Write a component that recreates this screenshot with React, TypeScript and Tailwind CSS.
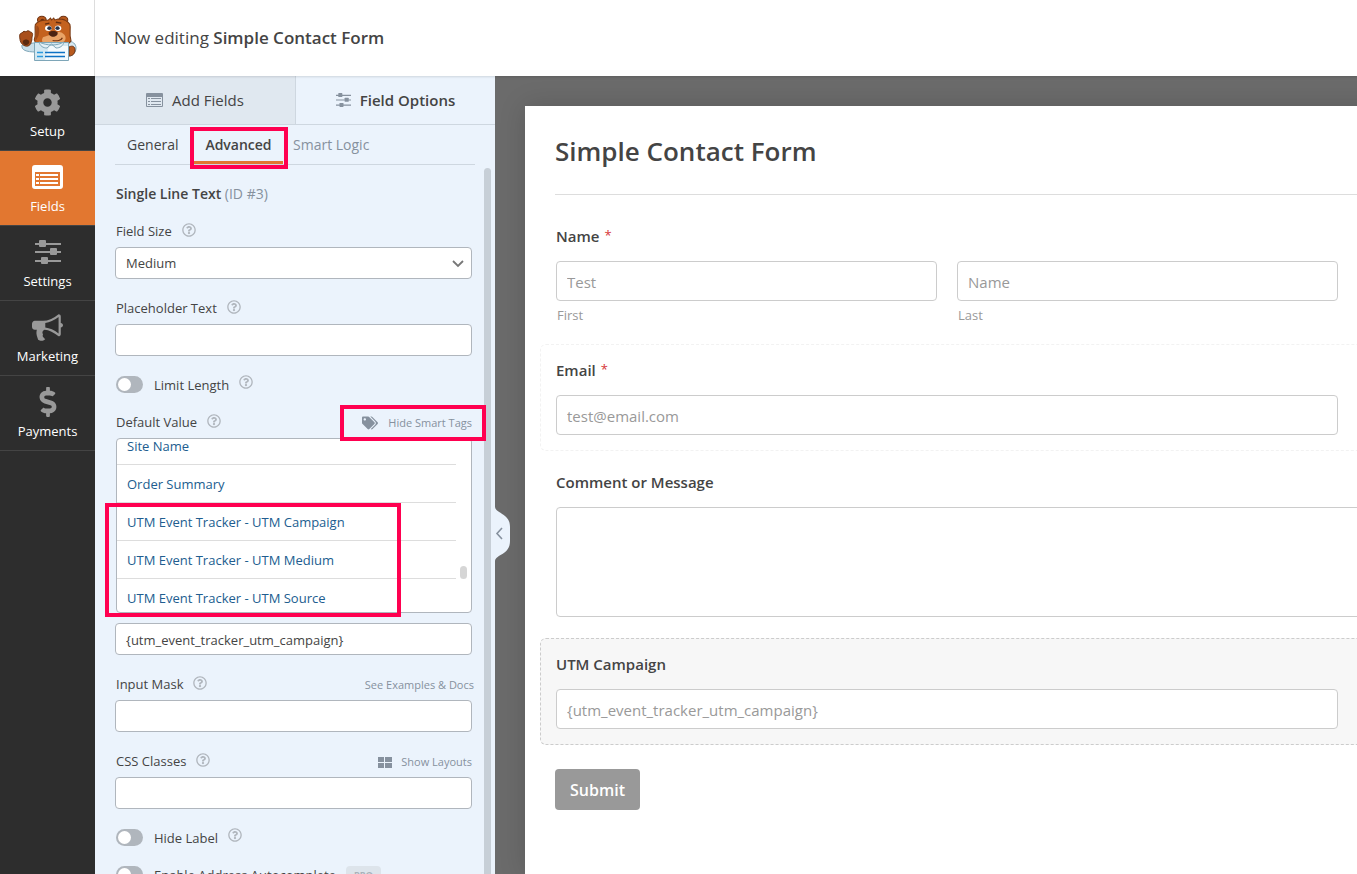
import type { ReactNode } from 'react';
import { FaCog, FaDollarSign, FaRegQuestionCircle, FaTags } from 'react-icons/fa';

function BearLogo() {
  return (
    <svg viewBox="0 0 62 50" className="h-[50px] w-[62px]" role="img" aria-label="Form builder mascot">
      <path d="M6 32c-1 5 4 7 14 7l3-8c-5-2-7-1-11 1z" fill="#c9dfea" stroke="#7ea6b8" strokeWidth="1" />
      <path d="M51 28c6 0 9 3 9 7s-3 8-7 8z" fill="#d8e8f0" stroke="#7ea6b8" strokeWidth="1" />
      <path d="M53 34c4-2 6 0 6 3s-2 6-6 6z" fill="#b85a1e" stroke="#6e3312" strokeWidth="1" />
      <path d="M4 26c-1-4 0-6 2-6 1-2 3-2 4-1 1-2 4-1 4 0 3 0 3 3 2 5 0 4-1 8-4 9-4 1-8-3-8-7z" fill="#a94f1b" stroke="#6e3312" strokeWidth="1" />
      <path d="M7 28c1-2 5-2 6 0s-1 4-3 4-4-2-3-4z" fill="#5b2a10" />
      <g transform="translate(1 1.500) scale(1.080 .91)">
        <circle cx="23" cy="6" r="4" fill="#b85a1e" stroke="#6e3312" />
        <circle cx="43" cy="6" r="4" fill="#b85a1e" stroke="#6e3312" />
        <circle cx="23.500" cy="6.500" r="1.800" fill="#6b3010" />
        <circle cx="42.500" cy="6.500" r="1.800" fill="#6b3010" />
        <path d="M17 11c2-4 8-5 12-5l2-2 1 2 2-2 1 2 3-1c5 0 9 2 11 6 1 5-1 10 1 18-2 5-8 6-17 6s-16-2-17-7c2-7 0-12 1-17z" fill="#c4621f" stroke="#793a14" strokeWidth="1" />
        <path d="M18 12c3 1 3 6 2 11l-3 7c0-6 1-12 1-18z" fill="#9f4a18" />
        <path d="M24 25c-3 6 2 8 8 8s13-2 13-7c0-4-3-6-6-7z" fill="#e9a468" />
        <ellipse cx="29" cy="15" rx="3" ry="3" fill="#fff" />
        <ellipse cx="38" cy="15" rx="3" ry="3" fill="#fff" />
        <circle cx="30" cy="15" r="2" fill="#28344a" />
        <circle cx="37.500" cy="15" r="2" fill="#28344a" />
        <path d="M26 10.500l4-1M36 8.500l5 1" stroke="#5f2c10" strokeWidth="1.500" />
        <path d="M29.500 19.500c2-2 6-2 8 0 1 3-2 5-4 5s-5-2-4-5z" fill="#4b2412" />
        <path d="M33 28.500c4 1 8 0 9-3" fill="none" stroke="#743614" strokeWidth="1.200" />
      </g>
      <path d="M18.500 29.500h34v18h-34z" fill="#d3e8f2" stroke="#7ea6b8" strokeWidth="1" />
      <path d="M33 33h19v14H29z" fill="#f4fafd" />
      <path d="M23 29c1 4 4 6 8 6l4.500-4 4.500 4c4 0 7-2 8-6-7 4-17 4-25 0z" fill="#e4f1f7" stroke="#7ea6b8" strokeWidth="1" />
      <path d="M21 39.500h6M21 43.500h6" stroke="#2a9ade" strokeWidth="1.500" />
      <path d="M29 39.500h20M29 43.500h20" stroke="#0d72c4" strokeWidth="1.500" />
    </svg>
  );
}

function FormIcon() {
  return (
    <svg viewBox="0 0 31 24" className="h-6 w-[31px]" fill="currentColor" aria-hidden="true">
      <path fillRule="evenodd" d="M3 0h25a3 3 0 0 1 3 3v18a3 3 0 0 1-3 3H3a3 3 0 0 1-3-3V3a3 3 0 0 1 3-3zM3 7v14h25V7z" />
      <path d="M4 9h3v2H4zM8 9h18v2H8zM4 13h3v2H4zM8 13h18v2H8zM4 17h3v2H4zM8 17h18v2H8z" />
    </svg>
  );
}

function SmallFormIcon() {
  return (
    <svg viewBox="0 0 17 14" className="h-[14px] w-[17px] text-[#86919e]" fill="currentColor" aria-hidden="true">
      <path fillRule="evenodd" d="M1 0h15a1 1 0 0 1 1 1v12a1 1 0 0 1-1 1H1a1 1 0 0 1-1-1V1a1 1 0 0 1 1-1zM1 4v9h15V4z" />
      <path d="M2 5h2v1H2zM5 5h10v1H5zM2 8h2v1H2zM5 8h10v1H5zM2 11h2v1H2zM5 11h10v1H5z" />
    </svg>
  );
}

function SlidersIcon({ className }: { className: string }) {
  return (
    <svg viewBox="0 0 26 24" className={className} fill="currentColor" aria-hidden="true">
      <path d="M0 3h26v2H0zM0 11h26v2H0zM0 20h26v2H0z" />
      <rect x="4" y="0" width="7" height="7" rx="1" />
      <rect x="15" y="8" width="7" height="7" rx="1" />
      <rect x="6" y="17" width="7" height="7" rx="1" />
    </svg>
  );
}

function BullhornIcon() {
  return (
    <svg viewBox="0 0 1792 1792" className="size-[31px]" fill="currentColor" aria-hidden="true">
      <path d="M1664 640q53 0 90.500 37.500t37.500 90.500-37.500 90.500-90.500 37.500v384q0 52-38 90t-90 38q-417-347-812-380-58 19-91 66t-31 100.500 40 92.500q-20 33-23 65.500t6 58 33.500 55 48 50 61.500 50.500q-29 58-111.500 83t-168.500 11.500-132-55.500q-7-23-29.500-87.500t-32-94.500-23-89-15-101 3.500-98.500 22-110.500h-122q-66 0-113-47t-47-113v-192q0-66 47-113t113-47h480q435 0 896-384 52 0 90 38t38 90v384zm-128 604v-954q-394 302-768 343v270q377 42 768 341z" />
    </svg>
  );
}

function LayoutIcon() {
  return (
    <svg viewBox="0 0 14 11" className="h-[11px] w-[14px]" fill="currentColor" aria-hidden="true">
      <path d="M0 0h6v5H0zM7 0h7v5H7zM0 6h6v5H0zM7 6h7v5H7z" />
    </svg>
  );
}

function Highlight({ className }: { className: string }) {
  return <span aria-hidden="true" className={`pointer-events-none absolute z-10 border-4 border-[#ff0050] ${className}`} />;
}

const navItems: { label: string; icon: ReactNode; active?: boolean }[] = [
  { label: 'Setup', icon: <FaCog className="size-[27px]" /> },
  { label: 'Fields', icon: <FormIcon />, active: true },
  { label: 'Settings', icon: <SlidersIcon className="h-6 w-[26px]" /> },
  { label: 'Marketing', icon: <BullhornIcon /> },
  { label: 'Payments', icon: <FaDollarSign className="size-[30px]" /> },
];

function SideNav() {
  return (
    <nav className="w-[95px] shrink-0 bg-[#2d2d2d]">
      {navItems.map((item) => (
        <button
          key={item.label}
          type="button"
          className={`flex h-[75px] w-full flex-col items-center border-b border-[#444] pt-[11px] text-[13px] ${
            item.active ? 'bg-[#e27730] text-white' : 'text-[#999]'
          }`}
        >
          <span className="flex h-[30px] items-center">{item.icon}</span>
          <span className="mt-1 leading-5 text-white">{item.label}</span>
        </button>
      ))}
    </nav>
  );
}

function Help() {
  return <FaRegQuestionCircle className="mb-1 ml-[10px] size-[14px] text-[#b0b6bd]" />;
}

function LabelRow({ id, label, children }: { id: string; label: string; children?: ReactNode }) {
  return (
    <div className="mb-[6px] flex h-5 items-center pt-[2px] pl-px">
      <label htmlFor={id}>{label}</label>
      <Help />
      {children}
    </div>
  );
}

const inputClass = 'block h-8 w-full rounded border border-[#b0b6bd] bg-white px-[10px] pt-[2px] text-[13px] text-[#444]';

function Toggle({ id, label, children }: { id: string; label: string; children?: ReactNode }) {
  return (
    <div className="flex h-[18px] items-center pl-px">
      <input
        id={id}
        type="checkbox"
        role="switch"
        className="h-[17px] w-[27px] appearance-none rounded-full bg-[#b0b6bd] p-[2px] before:block before:size-[13px] before:rounded-full before:bg-white checked:before:translate-x-[10px]"
      />
      <label htmlFor={id} className="ml-[11px] pt-[3px]">
        {label}
      </label>
      {children}
    </div>
  );
}

const smartTags = [
  'Site Name',
  'Order Summary',
  'UTM Event Tracker - UTM Campaign',
  'UTM Event Tracker - UTM Medium',
  'UTM Event Tracker - UTM Source',
];

function OptionsPanel() {
  return (
    <aside className="flex w-[400px] shrink-0 flex-col bg-[#ebf3fc] text-[#444]">
      <div className="flex h-[49px] shrink-0 border-b border-[#ced7e0] text-[15px]">
        <button type="button" className="flex w-[201px] items-center justify-center gap-[9px] border-r border-[#ced7e0] bg-[#e0e8f0]">
          <SmallFormIcon />
          Add Fields
        </button>
        <button type="button" className="flex flex-1 items-center justify-center gap-[9px] font-semibold">
          <SlidersIcon className="h-[14px] w-[15px] text-[#86919e]" />
          Field Options
        </button>
      </div>
      <div className="mx-5 flex h-10 shrink-0 border-b border-[#ced7e0] text-sm">
        <button type="button" className="w-[79px] pl-3 text-left">
          General
        </button>
        <button type="button" className="relative w-[89px] border-b-[3px] border-[#e27730] pt-[3px] font-semibold">
          Advanced
          <Highlight className="top-[2px] -right-[5px] -bottom-2 -left-1" />
        </button>
        <button type="button" className="pl-[10px] text-[#86919e]">
          Smart Logic
        </button>
      </div>
      <div className="flex min-h-0 flex-1 pr-1">
        <div className="flex min-w-0 flex-1 flex-col gap-[19px] pt-[19px] pr-3 pl-5 text-[13px]">
          <h2 className="h-[18px] pl-px text-sm leading-5 font-semibold">
            Single Line Text <span className="font-normal text-[#86919e]">(ID #3)</span>
          </h2>
          <div>
            <LabelRow id="size" label="Field Size" />
            <div className="relative">
              <select id="size" className={`${inputClass} appearance-none`}>
                <option>Medium</option>
              </select>
              <svg viewBox="0 0 12 8" className="pointer-events-none absolute top-[13px] right-2 h-2 w-3" fill="none" stroke="#777" strokeWidth="1.800" aria-hidden="true">
                <path d="M1 1l5 5 5-5" />
              </svg>
            </div>
          </div>
          <div>
            <LabelRow id="placeholder" label="Placeholder Text" />
            <input id="placeholder" className={inputClass} />
          </div>
          <Toggle id="limit" label="Limit Length">
            <Help />
          </Toggle>
          <div>
            <LabelRow id="default" label="Default Value">
              <button type="button" className="relative ml-auto flex items-center text-[11px] text-[#86919e]">
                <FaTags className="mr-[10px] size-4" />
                Hide Smart Tags
                <Highlight className="-top-[10px] -right-[14px] -bottom-[10px] -left-[22px]" />
              </button>
            </LabelRow>
            <div className="relative ml-px">
              <div className="h-[175px] overflow-hidden rounded border border-[#b0b6bd] bg-white">
                <ul className="-mt-3 mr-[15px]">
                  {smartTags.map((tag) => (
                    <li key={tag} className="h-[38px] border-b border-[#ddd] pl-[10px] leading-[39px]">
                      <a href="#default" className="text-[#215d8f]">
                        {tag}
                      </a>
                    </li>
                  ))}
                </ul>
              </div>
              <span className="absolute right-[5px] bottom-[34px] h-[13px] w-[7px] rounded-full bg-[#d6d6d6]" />
              <Highlight className="top-[65px] right-[71px] -bottom-1 -left-[11px]" />
            </div>
            <input id="default" defaultValue="{utm_event_tracker_utm_campaign}" className={`${inputClass} mt-[10px]`} />
          </div>
          <div>
            <LabelRow id="mask" label="Input Mask">
              <a href="#mask" className="-mr-[2px] ml-auto text-[11px] text-[#86919e]">
                See Examples &amp; Docs
              </a>
            </LabelRow>
            <input id="mask" className={inputClass} />
          </div>
          <div>
            <LabelRow id="css" label="CSS Classes">
              <button type="button" className="ml-auto flex items-center gap-[9px] text-[11px] text-[#86919e]">
                <LayoutIcon />
                Show Layouts
              </button>
            </LabelRow>
            <input id="css" className={inputClass} />
          </div>
          <Toggle id="hide" label="Hide Label">
            <Help />
          </Toggle>
          <Toggle id="autocomplete" label="Enable Address Autocomplete">
            <span className="ml-[10px] rounded bg-[#dde4eb] px-2 text-[9px] leading-[17px] font-bold text-[#a9b1b9]">PRO</span>
          </Toggle>
        </div>
        <div className="mt-[3px] w-[7px] shrink-0 rounded-t-full bg-[#c7cfd7]" />
      </div>
    </aside>
  );
}

const previewInput = 'block h-10 w-full rounded border border-[#ccc] bg-white px-[10px] pt-[2px] text-[15px] text-[#444] placeholder:text-[#999]';

function Field({ id, label, required, tone, children }: { id: string; label: string; required?: boolean; tone: string; children: ReactNode }) {
  return (
    <div className={`rounded-md border border-dashed p-[15px] ${tone}`}>
      <label htmlFor={id} className="mb-[15px] flex h-5 items-center text-[15px] font-semibold">
        {label}
        {required && <span className="ml-[5px] text-[13px] font-normal text-[#d63638]">*</span>}
      </label>
      {children}
    </div>
  );
}

function Preview() {
  return (
    <main className="relative min-w-0 flex-1 overflow-hidden bg-[#6b6b6b] pt-[30px] pl-[30px]">
      <button type="button" aria-label="Collapse panel" className="absolute top-[431px] left-0">
        <svg viewBox="0 0 15 54" className="h-[54px] w-[15px]" aria-hidden="true">
          <path d="M0 0c1 7 15 6 15 20v14c0 14-14 13-15 20z" fill="#ebf3fc" />
          <path d="M7 21l-5 5.500 5 5.500" fill="none" stroke="#86919e" strokeWidth="1.600" />
        </svg>
      </button>
      <form className="-mr-[60px] h-full bg-white px-[30px] pt-[25px] text-[#444] shadow-[0_0_25px_rgba(0,0,0,0.15)]">
        <h1 className="border-b border-[#ddd] pb-[23px] text-[26px] leading-10 font-semibold">Simple Contact Form</h1>
        <div className="-mx-[15px] mt-[15px] flex flex-col gap-[5px]">
          <Field id="first" label="Name" required tone="border-transparent">
            <div className="grid grid-cols-2 gap-5 pr-12 text-[13px] leading-4 text-[#999]">
              <div>
                <input id="first" placeholder="Test" className={previewInput} />
                <label htmlFor="first" className="mt-[6px] block pl-px">
                  First
                </label>
              </div>
              <div>
                <input id="last" placeholder="Name" className={previewInput} />
                <label htmlFor="last" className="mt-[6px] block pl-px">
                  Last
                </label>
              </div>
            </div>
          </Field>
          <Field id="email" label="Email" required tone="border-[#f2f2f2]">
            <div className="pr-12">
              <input id="email" type="email" placeholder="test@email.com" className={previewInput} />
            </div>
          </Field>
          <Field id="comment" label="Comment or Message" tone="border-transparent">
            <textarea id="comment" className="block h-[110px] w-full resize-none rounded border border-[#ccc] bg-white p-[10px]" />
          </Field>
          <Field id="utm" label="UTM Campaign" tone="border-[#ccc] bg-[#f7f7f7]">
            <div className="pr-12">
              <input id="utm" placeholder="{utm_event_tracker_utm_campaign}" className={previewInput} />
            </div>
          </Field>
        </div>
        <button type="button" className="mt-6 h-[41px] w-[85px] rounded bg-[#999] text-base font-semibold text-white">
          Submit
        </button>
      </form>
    </main>
  );
}

export default function App() {
  return (
    <div className="flex h-screen flex-col overflow-hidden bg-white font-['Open_Sans',sans-serif]">
      <header className="relative z-10 flex h-[76px] shrink-0 items-center bg-white text-[#444] shadow-[0_1px_2px_rgba(0,0,0,0.12)]">
        <div className="flex h-full w-[95px] items-center justify-center border-r border-[#ddd]">
          <BearLogo />
        </div>
        <p className="pl-[19px] text-[17px]">
          Now editing <strong className="font-semibold">Simple Contact Form</strong>
        </p>
      </header>
      <div className="flex min-h-0 flex-1">
        <SideNav />
        <OptionsPanel />
        <Preview />
      </div>
    </div>
  );
}
